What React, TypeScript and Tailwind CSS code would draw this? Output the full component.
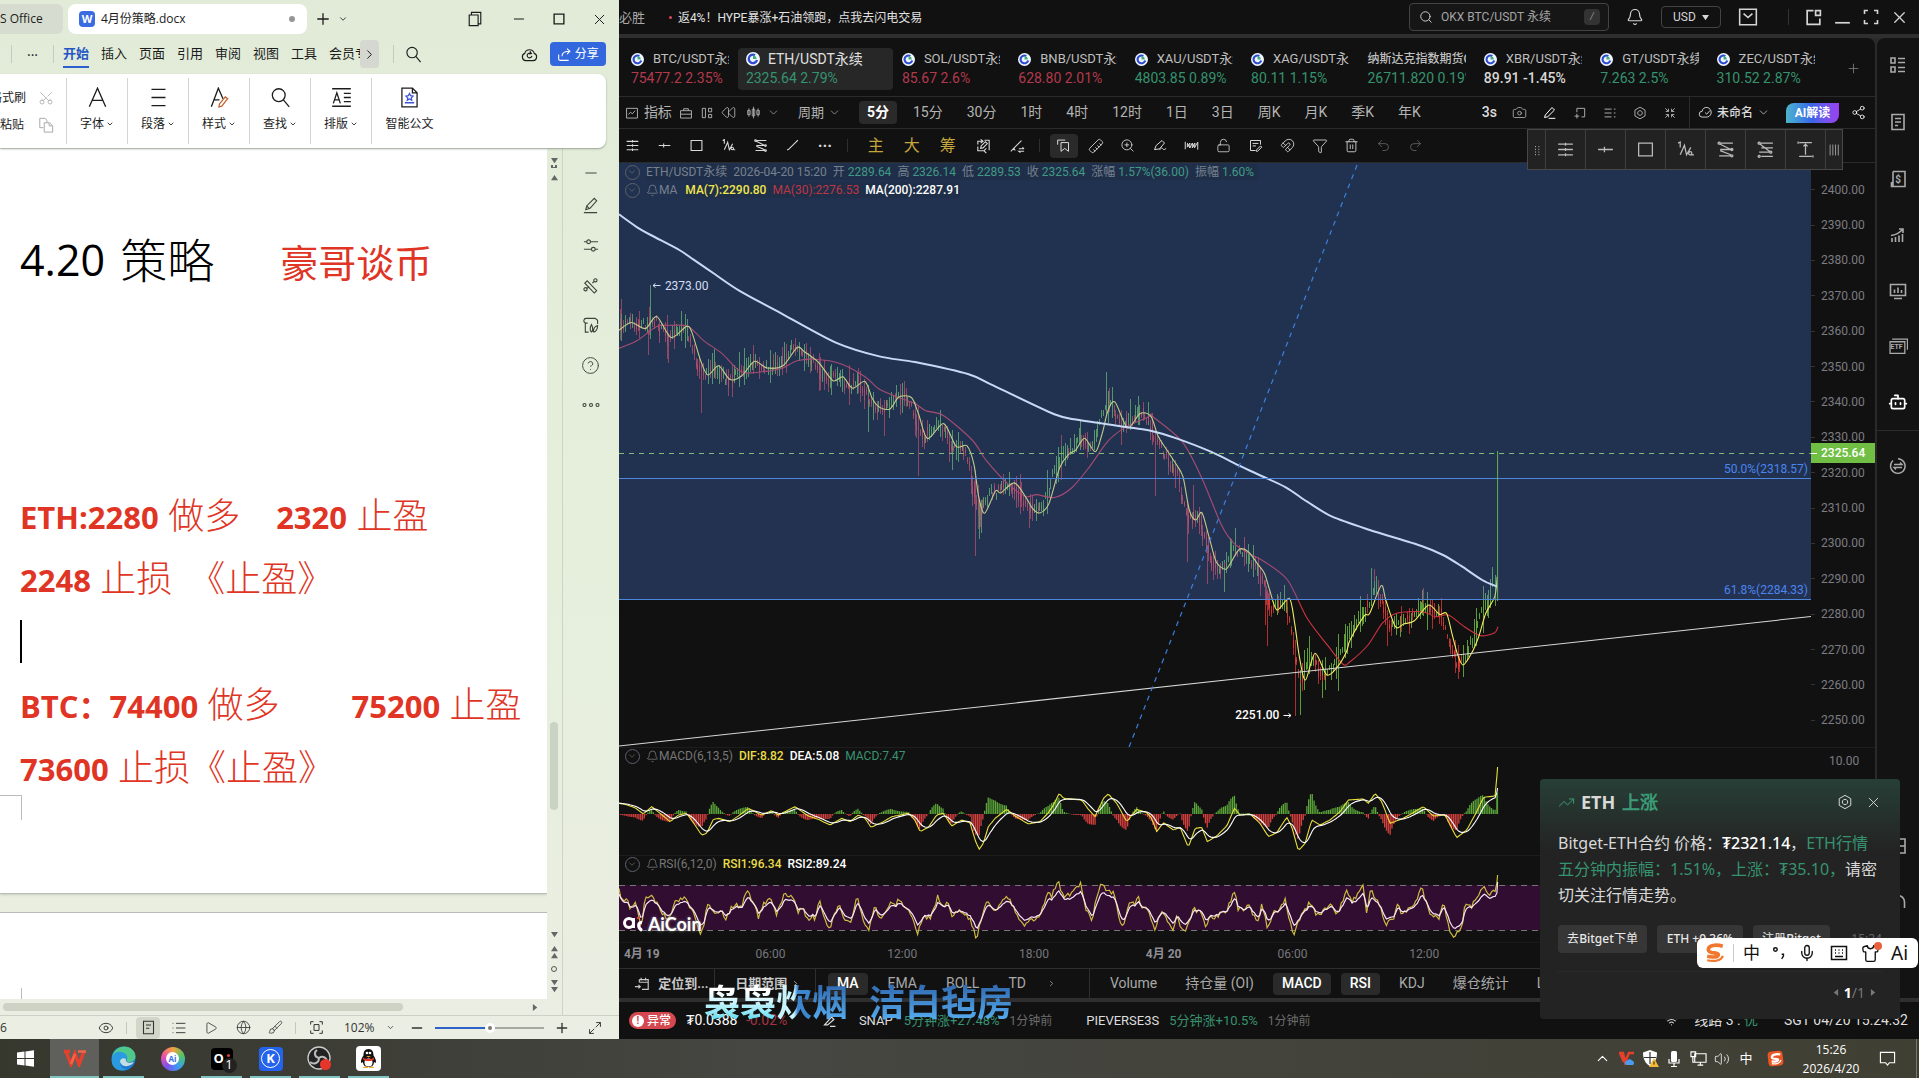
import React from "react";
import {
  Bell, Bot, Camera, ChevronDown, ChevronRight, ChevronUp, Eye, Filter, Globe, List, LockOpen, Magnet,
  Mic, Minus, Play, Plus, Redo2, Rewind, Ruler, Scissors, Search, Share2, Shirt,
  Trash2, TrendingUp, Undo2, Volume2, Wifi, X, ZoomIn, Brush, CircleHelp,
} from "lucide-react";

type P = [number, number];
type IconProps = { d: string; s?: number; w?: number; c?: string };

function Draw({ d, s = 18, w = 1.2, c = "" }: IconProps) {
  return (
    <svg width={s} height={s} viewBox="0 0 18 18" fill="none" stroke="currentColor" strokeWidth={w} className={c} aria-hidden="true">
      <path d={d} />
    </svg>
  );
}

/* ---------- icon paths on an 18 x 18 grid ---------- */
const D = {
  levels: "M2 4h14M2 9h14M2 14h14M9 2.5v3M9 7.5v3M9 12.5v3",
  hline: "M2 9h14M8 6.5v5",
  rect: "M2.5 3h13v12h-13z",
  wave: "M2 3l2-1v5M4 14l4-9 2 9 4-7M12 12.5a1.5 1.5 0 1 0 3 0a1.5 1.5 0 1 0-3 0M15 14h2",
  fib: "M4 3h12M4 9h11M3 15h11M4 4l10 5M4 10l10 4M2 3a1 1 0 1 0 2 0a1 1 0 1 0-2 0M14 15a1 1 0 1 0 2 0a1 1 0 1 0-2 0M14 9a1 1 0 1 0 2 0a1 1 0 1 0-2 0",
  fib2: "M4 3h12M5 7.500h11M3 11.500h10M5 15.500h11M4 4l9 7M2 3a1 1 0 1 0 2 0a1 1 0 1 0-2 0M13 11.500a1 1 0 1 0 2 0a1 1 0 1 0-2 0M2 15.500a1 1 0 1 0 2 0a1 1 0 1 0-2 0",
  range: "M3 2.500h12M3 15.500h12M9 4v10M7 6l2-2 2 2M2 1.500v2M16 14.500v2",
  trend: "M4 14L14 4M2.500 14.500l2-1M13.500 4.500l2-2",
  reedit: "M3 8V4.500h5M6 2.500l2.500 2L6 6.500M10 3.500h5V14M3 10v4.500h7M12 12l-2.500 2.500L12 17M6 12l.5-2.500L11 5l2 2-4.500 4.500z",
  penline: "M2 15L14 3M5 11l2 3M11 12h6M15 10.500l2 1.500M17 15h-6l2 1.500",
  bookmark: "M2 8V2.500h9M6 5.500h9V16l-4.500-3.500L6 16z",
  paint: "M3 14l2-5 7-6 3 3-6 7zM9 14.500c2-3 3-3 4-1.500s2 1 4-.5",
  mask: "M1.500 4.500v9M4 7v4l3-5v6l3-6v6l3-6v5l3.500-6v9M4 6l3 6M10 6l3 6",
  note: "M9 15H3V3h12v5M5.500 6.500h7M5.500 9.500h4M10 14.500l5-5 1.500 1.500-5 5H10z",
  chart: "M2 3h14v12.500H2zM4.500 11l2.500-3 2.500 2 3.500-4",
  brief: "M2 6h14v9.500H2zM6 6V3.500h6V6M2 10.500h14",
  grid: "M3 3h4v12H3zM11 3h4v4.500h-4zM11 11h4v4h-4z",
  candles: "M3.500 4v10M2 6.500h3v5H2zM9 2v14M7.500 5h3v8h-3zM14.500 4v10M13 6.500h3v5h-3z",
  crop: "M5 3h10v11h-4M5 3v5M5 10v6M2 13h6",
  lines: "M2 4h9M2 9h9M2 14h9M14 4h2M14 9h2M14 14h2",
  hex: "M9 1.500l6.500 3.700v7.600L9 16.500l-6.500-3.700V5.200zM9 6a3 3 0 1 0 .01 0",
  shrink: "M3 3l4 4M7 3.500V7H3.500M15 3l-4 4M11 3.500V7h3.500M3 15l4-4M7 14.500V11H3.500M15 15l-4-4M11 14.500V11h3.500",
  corner: "M9 2.500H3v13h12V10M11 2.500h4.500V7H11z",
  expand: "M2.500 6V2.500H6M12 2.500h3.500V6M15.500 12v3.500H12M6 15.500H2.500V12",
  mail: "M1.500 2h15v14h-15zM5 6l4 3.500 4-3.500",
  sidelist: "M2 2h4v5H2zM2 11h4v5H2zM9 2.500h7M9 6.500h7M9 11.500h7M9 15.500h7",
  doc: "M3 1.500h12v15H3zM6 5.500h6M6 9h6M6 12.500h3",
  growth: "M3 16v-4M6.500 16v-5M10 16V9.500M13.500 16V8M2 9.500c5-.5 8-2 11.500-6M10 3h4v4",
  monitor: "M1.500 2.500h15v11h-15zM5.500 11V7.500M9 11V5.500M12.500 11V8M5 16.500h8",
  swap: "M4 3.500a7.300 7.300 0 1 0 5-1.800M5 7.500h8l-2-2M13 10.500H5l2 2",
  calendar: "M6 4H16v11H9M6 4v3M6 7h10M8 2v3M13 2v3M1 12h6M5 10l2 2-2 2",
  para: "M3 2h12M3 9h12M3 16h12",
  focus: "M2 5.500V2h3.500M12.500 2H16v3.500M16 12.500V16h-3.500M5.500 16H2v-3.500M6 5.500h6v7H6z",
  full: "M10.500 2H16v5.500M16 2l-6 6M7.500 16H2v-5.500M2 16l6-6",
  pen: "M2 16.500h14M4 13.500l1-4 8-8 2.500 2.500-7 8zM5 9.500l3 3",
  sliders: "M2 5h3M9 5h8M5 5a2 2 0 1 0 4 0a2 2 0 1 0-4 0M2 13h8M14 13h3M10 13a2 2 0 1 0 4 0a2 2 0 1 0-4 0",
  tools: "M3 6.500l2.500-2.500L15.500 14.500l-2.500 2.500zM12.500 3.500a1.700 1.700 0 1 0 3.400 0a1.700 1.700 0 1 0-3.400 0M2 13a1.700 1.700 0 1 0 3.400 0a1.700 1.700 0 1 0-3.400 0M5.500 12l2-2M11 6.500l2-2",
  picture: "M6 6.500H4a2.500 2.500 0 1 1 1-5h9l2.500 2v4M3.500 6.500v9.500H7M10 16c-2-2-1.500-5 0-8 1.500 3 2 6 0 8M12 16c0-4 1-6 4.500-7 0 4-1.500 6.500-4.500 7",
  magnifier: "M2 7a5.500 5.500 0 1 0 11 0a5.500 5.500 0 1 0-11 0M11.500 11l5 6",
};

/* ---------- chart data ---------- */
const z = (pts: P[], ox: number, oy: number, sx: number, sy: number): P[] => pts.map(([x, y]) => [ox + x / sx, oy + y / sy]);

const ma7 = z([[11,365],[45,343],[85,360],[117,326],[157,385],[200,354],[215,370],[240,450],[260,490],[290,464],[322,503],[355,492],[390,452],[425,470],[470,464],[510,413],[530,425],[570,455],[610,506],[638,495],[665,527],[700,508],[720,555],[740,580],[770,585],[795,552],[830,553],[850,600],[875,668],[920,626],[955,690],[985,688],[1005,740],[1018,830],[1035,877],[1065,815],[1080,820],[1118,792],[1150,832],[1170,865],[1190,876],[1215,850],[1245,750],[1270,712],[1290,700],[1315,667],[1345,705],[1365,650],[1380,590],[1400,566],[1435,638],[1470,598],[1500,605],[1520,660],[1545,700],[1568,735]], 615, 200, 2.8, 2.8)
  .concat(z([[232,380],[250,480],[268,510],[285,488],[305,560],[325,635],[350,658],[365,640],[390,598],[415,605],[440,640],[460,670],[475,720],[495,780],[530,745],[545,820],[558,920],[575,990],[602,910],[635,975],[665,950],[690,905],[700,870],[740,797],[755,790],[787,707],[800,750],[827,830],[850,822],[880,812],[920,765],[950,793],[970,790],[985,850],[1000,910],[1016,945],[1040,910],[1060,860],[1080,790],[1105,740],[1112,680]], 1100, 350, 2.8, 3));
const ma30 = z([[11,415],[60,395],[117,354],[160,351],[205,354],[250,395],[300,430],[355,482],[420,480],[470,470],[510,450],[560,446],[630,458],[700,495],[740,530],[800,555],[840,570],[870,590],[920,604],[1000,672],[1040,730],[1100,795],[1150,830],[1180,825],[1230,833],[1280,805],[1330,745],[1380,675],[1430,636],[1500,605]], 615, 200, 2.8, 2.8)
  .concat(z([[145,198],[230,275],[285,385],[340,525],[375,580],[420,612],[460,635],[525,690],[580,805],[640,890],[680,943],[700,935],[750,885],[790,820],[830,790],[900,785],[940,800],[975,795],[1020,830],[1065,857],[1105,848],[1114,830]], 1100, 350, 2.8, 3));
const ma200 = z([[11,40],[60,75],[100,98],[180,140],[220,167],[280,208],[350,255],[470,320],[620,400],[740,438],[840,454],[990,488],[1060,520],[1230,600],[1300,616],[1440,637],[1500,646],[1568,666]], 615, 200, 2.8, 2.8)
  .concat(z([[310,305],[390,347],[440,372],[520,412],[580,455],[650,500],[755,540],[900,588],[960,615],[1010,647],[1070,690],[1112,710]], 1100, 350, 2.8, 3));
const difPts = z([[12,190],[30,193],[60,203],[85,222],[110,200],[150,232],[165,245],[190,225],[215,220],[240,255],[260,285],[275,280],[295,238],[310,235],[345,245],[370,228],[400,205],[440,225],[470,212],[490,225],[540,200],[580,228],[610,238],[645,255],[680,235],[705,245],[730,225],[750,235],[768,262],[800,248],[830,230],[880,220],[900,240],[915,275],[940,262],[965,225],[985,220],[1010,258],[1040,240],[1065,248],[1080,300],[1092,328],[1105,310],[1120,260],[1140,235],[1175,208],[1200,228],[1240,252],[1275,245],[1300,218],[1315,195],[1333,160],[1345,175],[1400,180],[1420,208],[1440,230],[1465,175],[1480,162]], 615, 740, 3, 3)
  .concat(z([[110,190],[140,245],[170,208],[200,218],[215,235],[230,275],[250,248],[280,270],[300,262],[325,322],[345,265],[365,262],[382,305],[410,288],[440,258],[463,205],[480,225],[510,222],[540,250],[565,290],[590,278],[620,232],[635,260],[655,332],[675,310],[695,240],[720,255],[750,240],[780,215],[805,180],[850,177],[865,190],[885,160],[905,185],[930,250],[970,235],[1030,200],[1060,228],[1095,225],[1115,265],[1130,293],[1160,270],[1190,215],[1210,172],[1245,168],[1253,82]], 1080, 740, 3, 3));
const rsiPts = z([[12,440],[20,485],[35,475],[45,510],[60,480],[80,560],[90,470],[110,465],[150,530],[165,535],[182,480],[210,478],[235,520],[255,587],[268,545],[278,490],[300,520],[320,515],[330,545],[350,500],[380,495],[398,452],[410,480],[430,530],[445,490],[470,475],[485,525],[507,460],[520,480],[530,460],[550,515],[565,505],[580,550],[595,525],[600,555],[612,480],[630,545],[645,562],[670,490],[690,540],[708,555],[727,465],[745,540],[762,568],[780,495],[795,535],[830,480],[840,500],[850,480],[890,525],[908,582],[925,530],[945,535],[968,470],[980,500],[1000,490],[1010,535],[1025,510],[1065,535],[1085,597],[1105,510],[1115,485],[1140,520],[1175,468],[1195,500],[1215,545],[1230,560],[1245,540],[1275,530],[1300,455],[1310,470],[1328,420],[1345,470],[1370,460],[1397,430],[1410,500],[1430,540],[1455,435],[1500,465]], 615, 740, 3, 3)
  .concat(z([[110,500],[127,565],[150,490],[165,490],[172,465],[185,505],[200,495],[225,568],[245,510],[265,550],[280,568],[290,530],[305,568],[320,570],[340,510],[360,510],[380,565],[390,530],[410,530],[440,510],[463,455],[475,510],[510,500],[520,530],[535,540],[545,490],[562,565],[580,520],[590,515],[615,480],[630,545],[643,587],[655,540],[690,487],[710,530],[750,490],[770,525],[800,455],[815,485],[850,440],[860,515],[872,445],[900,500],[917,555],[945,530],[950,490],[965,520],[1000,495],[1025,445],[1045,510],[1075,540],[1090,480],[1105,560],[1120,590],[1145,560],[1155,495],[1175,500],[1210,437],[1220,465],[1245,455],[1253,407]], 1080, 740, 3, 3));

function smooth(p: P[]): string {
  let s = `M${p[0][0].toFixed(1)} ${p[0][1].toFixed(1)}`;
  for (let i = 1; i < p.length; i++) {
    const a = p[Math.max(0, i - 2)], b = p[i - 1], c = p[i], n = p[Math.min(p.length - 1, i + 1)];
    s += `C${(b[0] + (c[0] - a[0]) / 7).toFixed(1)} ${(b[1] + (c[1] - a[1]) / 7).toFixed(1)} ${(c[0] - (n[0] - b[0]) / 7).toFixed(1)} ${(c[1] - (n[1] - b[1]) / 7).toFixed(1)} ${c[0].toFixed(1)} ${c[1].toFixed(1)}`;
  }
  return s;
}
const poly = (p: P[]) => "M" + p.map(([x, y]) => `${x.toFixed(1)} ${y.toFixed(1)}`).join("L");
function at(p: P[], x: number): number {
  if (x <= p[0][0]) return p[0][1];
  for (let i = 1; i < p.length; i++) {
    if (x <= p[i][0]) {
      const t = (x - p[i - 1][0]) / (p[i][0] - p[i - 1][0]);
      return p[i - 1][1] + t * (p[i][1] - p[i - 1][1]);
    }
  }
  return p[p.length - 1][1];
}
let seed = 20260420;
const rnd = () => {
  seed = (seed * 1664525 + 1013904223) % 4294967296;
  return seed / 4294967296;
};

const STEP = 1.81;
let upBars = "", downBars = "", upThick = "", downThick = "";
for (let x = 620; x < 1494; x += STEP) {
  const lead = at(ma7, x + 5) - at(ma7, x);
  const mid = at(ma7, x) + lead * 0.9 + (rnd() - 0.5) * 9;
  const len = 3 + rnd() * rnd() * 22;
  const up = rnd() < 0.5 - lead * 0.05;
  const seg = `M${x.toFixed(1)} ${(mid - len * 0.9).toFixed(1)}V${(mid + len * 0.9).toFixed(1)}`;
  const body = `M${x.toFixed(1)} ${(mid - len * 0.3).toFixed(1)}V${(mid + len * 0.35).toFixed(1)}`;
  if (up) { upBars += seg; upThick += body; } else { downBars += seg; downThick += body; }
}
const spikes: [number, number, number, boolean][] = [
  [650, 285, 318, true], [621, 299, 325, false], [648, 330, 355, false], [668, 340, 363, false], [701, 370, 413, false], [868, 385, 432, true], [884, 400, 436, false],
  [918, 405, 476, false], [952, 430, 470, true], [975, 470, 556, false], [979, 500, 539, true], [981, 500, 533, true], [1029, 505, 528, false], [1061, 435, 480, false],
  [1080, 420, 450, true], [1106, 372, 410, true], [1109, 388, 412, false], [1130, 399, 430, true], [1138, 396, 425, true], [1148, 402, 425, true], [1155, 430, 496, false], [1187, 500, 562, false],
  [1207, 545, 584, false], [1224, 560, 592, true], [1193, 485, 520, false], [1235, 528, 555, true], [1267, 590, 646, false], [1265, 580, 625, false], [1295, 640, 716, false], [1300, 670, 715, true], [1304, 650, 690, true],
  [1322, 660, 698, true], [1338, 634, 691, true], [1371, 568, 606, true], [1374, 569, 586, false], [1387, 610, 646, false], [1422, 590, 615, true], [1423, 588, 612, false],
  [1455, 640, 673, false], [1463, 645, 677, true], [1483, 586, 633, true], [1488, 590, 618, true], [1495, 575, 606, true],
];
for (const [x, a, b, up] of spikes) {
  if (up) upBars += `M${x} ${a}V${b}`; else downBars += `M${x} ${a}V${b}`;
}

const dif: P[] = [], dea: P[] = [];
let macdUp = "", macdDown = "";
let ema = at(difPts, 619);
for (let x = 619; x < 1497; x += STEP) {
  const v = at(difPts, x);
  ema = ema + (v - ema) * 0.26;
  dif.push([x, v]);
  dea.push([x, ema]);
  const h = (v - ema) * 1.9;
  if (h < 0) macdUp += `M${x.toFixed(1)} 814V${Math.max(794, 814 + h).toFixed(1)}`; else macdDown += `M${x.toFixed(1)} 814V${(814.5 + h).toFixed(1)}`;
}
dif.push([1497.5, 767]);
dea.push([1497.5, 788]);
const rsi1: P[] = [], rsi2: P[] = [];
let avg = at(rsiPts, 619);
for (let x = 619; x < 1497; x += STEP) {
  const v = at(rsiPts, x) + (rnd() - 0.5) * 5;
  avg = avg + (v - avg) * 0.6;
  rsi1.push([x, v]);
  rsi2.push([x, 910 + (avg - 910) * 0.72]);
}
rsi1.push([1497.5, 875]);
rsi2.push([1497.5, 882]);

/* ---------- small shared parts ---------- */
function CoinMark({ s = 13 }: { s?: number }) {
  return (
    <svg width={s} height={s} viewBox="0 0 14 14" aria-hidden="true" className="shrink-0">
      <circle cx="7" cy="7" r="7" fill="#f2f6ff" />
      <path d="M9 3.200A4.200 4.200 0 1 0 11 8" fill="none" stroke="#2b4bd0" strokeWidth="2.300" />
      <path d="M7 7V3.500a3.500 3.500 0 0 1 3.500 3.500z" fill="#3fae7c" />
    </svg>
  );
}
function Btn({ label, className = "", children }: { label?: string; className?: string; children: React.ReactNode }) {
  return <button type="button" aria-label={label} className={"flex items-center justify-center shrink-0 whitespace-nowrap " + className}>{children}</button>;
}
function Tri({ dir }: { dir: "left" | "right" | "up" | "down" }) {
  const path = { left: "M7 0v8L2 4z", right: "M1 0v8l5-4z", up: "M0 7h8L4 1z", down: "M0 1h8L4 7z" }[dir];
  return <svg width="7" height="7" viewBox="0 0 8 8" fill="currentColor" aria-hidden="true" className="shrink-0"><path d={path} /></svg>;
}

/* ---------- document editor ---------- */
function Num({ className = "", children }: { className?: string; children: React.ReactNode }) {
  return <b className={"text-[31px] font-bold " + className}>{children}</b>;
}

function Editor() {
  return (
    <section className="flex w-[32.25%] shrink-0 flex-col overflow-hidden bg-linear-to-b from-[#e1ebd8] via-[#e5efdb] to-[#ebeee3] text-[12px] text-[#1c1c1c] [font-family:'Open_Sans','Noto_Sans_CJK_SC',sans-serif]">
      <div className="flex h-[38px] items-center">
        <Btn className="h-[30px] w-[63px] !justify-start rounded-r-md bg-[#d6dccf]">S Office</Btn>
        <div className="ml-[5px] flex h-[30px] w-[239px] items-center rounded-lg bg-white pl-[11px] pr-[12px]">
          <span className="mr-[6px] flex h-4 w-4 items-center justify-center rounded-sm bg-[#3a6be3] text-[11px] font-bold text-white">W</span>
          4月份策略.docx
          <span className="ml-auto h-[6px] w-[6px] rounded-full bg-[#969696]" />
        </div>
        <Btn label="新建" className="ml-[7px]"><Plus size={18} strokeWidth={1.700} /></Btn>
        <Btn label="更多标签" className="ml-[6px]"><ChevronDown size={10} strokeWidth={2} /></Btn>
        <div className="ml-auto flex items-center gap-[24px] pr-[11px]">
          <Btn label="窗口"><Draw d="M2.500 4.500h10v12h-10zM5 4V1.500h10.500v13H13" s={16} w={1.300} /></Btn>
          <Btn label="最小化" className="ml-1"><Minus size={16} strokeWidth={1.500} /></Btn>
          <Btn label="最大化"><Draw d="M3.500 3.500h11v11h-11z" s={16} w={1.500} /></Btn>
          <Btn label="关闭"><X size={17} strokeWidth={1.400} /></Btn>
        </div>
      </div>

      <div className="flex h-[32px] items-center text-[13px]">
        <span className="ml-[11px] h-[18px] w-px bg-[#c5cabf]" />
        <Btn className="w-[41px] text-[14px]">···</Btn>
        <span className="h-[18px] w-px bg-[#c5cabf]" />
        <div className="ml-[9px] flex w-[297px] gap-3 overflow-hidden">
          <Btn className="border-b-2 border-[#2c5fd0] pb-[2px] pt-[4px] font-bold text-[#2456c5]">开始</Btn>
          {["插入", "页面", "引用", "审阅", "视图", "工具", "会员专享"].map((t) => <Btn key={t}>{t}</Btn>)}
        </div>
        <Btn label="更多" className="h-[28px] w-[19px] rounded bg-[#d4d8d0]"><ChevronRight size={15} strokeWidth={1.600} /></Btn>
        <span className="ml-[14px] h-[18px] w-px bg-[#c5cabf]" />
        <Btn label="搜索" className="ml-[11px]"><Draw d={D.magnifier} s={17} /></Btn>
        <div className="ml-auto flex items-center gap-3 pr-[13px]">
          <Btn label="云同步"><Draw d="M5 15.500a4 4 0 0 1-1-7.700 5.200 5.200 0 0 1 10 0 4 4 0 0 1-1 7.700zM11.500 10.500a2.500 2.500 0 1 1-1-2.500M9.500 5.500l1.500 2.500-2.500.5" s={17} /></Btn>
          <Btn className="h-6 w-[56px] gap-[3px] rounded bg-[#3367dd] text-[12px] text-white">
            <Draw d="M2 9v5.500a1.500 1.500 0 0 0 1.500 1.500H14M6 11c0-4 3-6 9-6M12 2l3.500 3L12 8.500" s={15} w={1.300} />分享
          </Btn>
        </div>
      </div>

      <div className="z-10 mr-[13px] mt-[4px] flex h-[74px] rounded-r-lg bg-white shadow-[0_1px_2px_#9aa294]">
        <div className="grid w-[66px] grid-cols-[26px_1fr] overflow-hidden py-[10px]">
          <Btn className="!justify-end">格式刷</Btn>
          <Btn label="剪切" className="text-[#a9a9a9]"><Scissors size={16} strokeWidth={1.200} className="-rotate-90" /></Btn>
          <Btn className="!justify-end">粘贴 <ChevronDown size={9} /></Btn>
          <Btn label="复制" className="text-[#a9a9a9]"><Draw d="M6 12H2V1.500h6l2 2V6M7 6.500h6l3.500 3.500v7H7zM12.500 6.500V10h4" s={16} w={1.100} /></Btn>
        </div>
        {[
          ["字体", "M2 17L9 1l7 16M4.500 11.500h9", true], ["段落", D.para, true], ["样式", "M2 17L8 1l4 9M4 11h5", true],
          ["查找", D.magnifier, true], ["排版", "M1 1.500h16M1 16.500h16M2 14l3-9 3 9M3 11h4M11 5.500h6M11 9h6M11 12.500h6", true], ["智能公文", "M2.500 1h9l4 4v12h-13zM11.500 1v4h4", false],
        ].map(([t, d, arrow]) => (
          <Btn key={t as string} className={"my-[4px] flex-col gap-[7px] border-l border-[#d4d4d4] " + (arrow ? "w-[61px]" : "w-[76px]")}>
            <span className="relative mt-[-2px]">
              <Draw d={d as string} s={21} w={1.100} />
              {t === "样式" && <span className="absolute inset-0 text-[#c8622c]"><Draw d="M9 14.500l5-6 2 1.500-5 6.500-2.500.5z" s={21} w={1.100} /></span>}
              {!arrow && <span className="absolute inset-0 text-[#3c53d8]"><Draw d="M5 13.500h8M9 5.500l1 2 2 .3-1.500 1.500.4 2-1.900-1-1.900 1 .4-2L6 7.800l2-.3z" s={21} w={1.100} /></span>}
            </span>
            <span className="flex items-center gap-[2px]">{t}{arrow && <ChevronDown size={8} strokeWidth={2.500} />}</span>
          </Btn>
        ))}
      </div>

      <div className="flex min-h-0 flex-1">
        <div className="flex min-w-0 flex-1 flex-col overflow-hidden text-[#e03424]">
          <article className="flex h-[746px] shrink-0 flex-col border-b border-[#b9bbb6] bg-white text-[36px] font-light whitespace-nowrap shadow-sm">
            <h1 className="mt-[70px] flex h-[84px] items-center pl-5 text-[43px] font-normal text-black">
              4.20&nbsp;<span className="ml-[4px] text-[47px] font-light">策略</span><span className="ml-[66px] mt-[4px] text-[38px] text-[#e03424]">豪哥谈币</span>
            </h1>
            <div className="mt-[182px] h-[63px] pl-5 leading-[63px]"><Num>ETH:2280</Num> 做多<Num className="ml-[36px]">2320</Num> 止盈</div>
            <div className="h-[63px] pl-5 leading-[63px]"><Num>2248</Num> 止损<span className="ml-[17px]">《止盈》</span></div>
            <div className="flex h-[63px] items-center pl-5"><span className="h-[43px] w-[2px] bg-black" /></div>
            <div className="h-[63px] pl-5 leading-[63px]"><Num>BTC：74400</Num> 做多<Num className="ml-[72px]">75200</Num> 止盈</div>
            <div className="h-[63px] pl-5 leading-[63px]"><Num>73600</Num> 止损《止盈》</div>
            <span className="-mt-1 h-[25px] w-[22px] border-r border-t border-[#bcbcbc]" />
          </article>
          <div className="mt-[18px] flex min-h-0 flex-1 items-end border-t border-[#b9bbb6] bg-white">
            <span className="h-[11px] w-[22px] border-r border-[#bcbcbc]" />
          </div>
          <div className="flex h-4 items-center gap-[129px] pl-[3px] text-[#666]">
            <span className="h-2 w-[400px] rounded bg-[#cdd2c5]" />
            <Tri dir="right" />
          </div>
        </div>
        <div className="flex w-4 flex-col items-center border-r border-[#cdd4c6] pb-[24px] pt-[9px] text-[#666]">
          <Tri dir="down" /><span className="mt-px h-[3px] w-[6px] border-x-2 border-b border-[#666]" />
          <span className="mt-[6px]"><Tri dir="up" /></span>
          <span className="mt-[541px] h-[88px] w-2 rounded bg-[#cad3c3]" />
          <span className="mb-[4px] mt-auto flex flex-col items-center gap-[7px]">
            <Tri dir="down" />
            <span><Tri dir="up" /><Tri dir="up" /></span>
            <span className="h-[6px] w-[6px] rounded-sm border-[1px] border-[#555]" />
            <span className="-mb-[6px]"><Tri dir="down" /><Tri dir="down" /></span>
          </span>
        </div>
        <div className="flex w-[56px] flex-col items-center pt-[5px] text-[#3f443b]">
          <Btn label="收起" className="-mb-2 h-10"><Minus size={18} strokeWidth={1.300} /></Btn>
          {[D.pen, D.sliders, D.tools, D.picture].map((d, i) => <Btn key={i} label="工具" className="h-10"><Draw d={d} s={17} w={1.200} /></Btn>)}
          <Btn label="帮助" className="h-10"><CircleHelp size={19} strokeWidth={1.200} /></Btn>
          <Btn label="更多" className="h-10"><Draw d="M1 9a1.500 1.500 0 1 0 3 0a1.500 1.500 0 1 0-3 0M7.500 9a1.500 1.500 0 1 0 3 0a1.500 1.500 0 1 0-3 0M14 9a1.500 1.500 0 1 0 3 0a1.500 1.500 0 1 0-3 0" w={1.100} /></Btn>
        </div>
      </div>

      <div className="flex h-6 items-center border-t border-[#ccd1c6] text-[#333]">
        <span className="w-[98px]">6</span>
        <Btn label="护眼" className="w-4"><Eye size={16} strokeWidth={1.400} /></Btn>
        <span className="ml-[12px] mr-[9px] h-3 w-px bg-[#c3c8bc]" />
        <Btn label="页面视图" className="mr-[3px] h-[22px] w-6 rounded bg-[#d3d7ca]"><Draw d="M3 1.500h12v15H3zM6 6h6M6 10h4" s={15} w={1.300} /></Btn>
        <Btn label="大纲" className="w-8"><List size={16} strokeWidth={1.400} /></Btn>
        <Btn label="阅读" className="w-8"><Play size={14} strokeWidth={1.400} /></Btn>
        <Btn label="网页" className="w-8"><Globe size={15} strokeWidth={1.300} /></Btn>
        <Btn label="批注" className="w-8"><Brush size={15} strokeWidth={1.300} /></Btn>
        <span className="ml-[4px] mr-[12px] h-3 w-px bg-[#c3c8bc]" />
        <Btn label="适应" className="w-4"><Draw d={D.focus} s={15} /></Btn>
        <Btn className="ml-[20px] gap-[11px]">102%<ChevronDown size={9} /></Btn>
        <Btn label="缩小" className="ml-[14px]"><Minus size={16} /></Btn>
        <input type="range" aria-label="缩放" defaultValue={51} className="mx-[10px] h-[2px] min-w-0 flex-1 appearance-none bg-linear-to-r from-[#2f62c8] from-50% to-[#a5a9a0] to-50% [&::-webkit-slider-thumb]:h-[10px] [&::-webkit-slider-thumb]:w-[10px] [&::-webkit-slider-thumb]:appearance-none [&::-webkit-slider-thumb]:rounded-full [&::-webkit-slider-thumb]:border-[3px] [&::-webkit-slider-thumb]:border-white [&::-webkit-slider-thumb]:bg-[#777]" />
        <Btn label="放大"><Plus size={16} /></Btn>
        <Btn label="全屏" className="ml-[18px] mr-[17px]"><Draw d={D.full} s={14} /></Btn>
      </div>
    </section>
  );
}

/* ---------- trading terminal ---------- */
const TABS: [string, string, string][] = [
  ["SOL/USDT永续", "85.67 2.6%", "text-[#b33a4d]"], ["BNB/USDT永续", "628.80 2.01%", "text-[#b33a4d]"], ["XAU/USDT永续", "4803.85 0.89%", "text-[#36936f]"],
  ["XAG/USDT永续", "80.11 1.15%", "text-[#36936f]"], ["纳斯达克指数期货CFD", "26711.820 0.19%", "text-[#36936f]"], ["XBR/USDT永续", "89.91 -1.45%", "font-medium text-[#d8d8d8]"],
  ["GT/USDT永续", "7.263 2.5%", "text-[#36936f]"], ["ZEC/USDT永续", "310.52 2.87%", "text-[#36936f]"],
];

function TitleBar() {
  return (
    <header className="flex h-[34px] shrink-0 items-center text-[12px] text-[#d5d5d5]">
      <span className="w-[50px] pt-px text-[13px] text-[#aaa]">必胜</span>
      <span className="mr-[6px] h-[3px] w-[3px] rounded-full bg-[#e0475a]" />
      <a href="#promo" className="mr-auto pt-px text-[#e2e2e2]">返4%！HYPE暴涨+石油领跑，点我去闪电交易</a>
      <label className="flex h-7 w-[200px] items-center rounded border border-[#434343] bg-[#161616] pl-[9px] pr-2">
        <Search size={14} strokeWidth={1.600} className="mr-2 shrink-0" />
        <input aria-label="搜索" defaultValue="OKX BTC/USDT 永续" className="min-w-0 flex-1 bg-transparent text-[#a5a5a5] outline-none" />
        <kbd className="flex h-4 w-4 items-center justify-center rounded-sm bg-[#333] text-[10px] text-[#888]">/</kbd>
      </label>
      <Btn label="提醒" className="ml-[17px]"><Bell size={18} strokeWidth={1.600} /></Btn>
      <label className="relative ml-[17px] flex h-[22px] w-[60px] items-center rounded border border-[#434343]">
        <select aria-label="货币" className="w-full appearance-none bg-transparent pl-[11px] outline-none"><option>USD</option></select>
        <span className="pointer-events-none absolute right-[11px]"><Tri dir="down" /></span>
      </label>
      <Btn label="消息" className="ml-[17px]"><Draw d={D.mail} s={20} w={1.400} /></Btn>
      <span className="ml-[30px] mr-[15px] h-4 w-px bg-[#333]" />
      <div className="flex gap-[10px] pr-[10px]">
        <Btn label="布局"><Draw d={D.corner} s={19} w={1.600} /></Btn>
        <Btn label="最小化"><Draw d="M2 14h14" s={19} w={1.600} /></Btn>
        <Btn label="全屏"><Draw d={D.expand} s={18} w={1.600} /></Btn>
        <Btn label="关闭"><X size={19} strokeWidth={1.600} /></Btn>
      </div>
    </header>
  );
}

function Quote({ name, price, cls }: { name: string; price: string; cls: string }) {
  const coin = name.includes("/");
  return (
    <Btn className="mr-[18px] min-w-0 flex-1 flex-col !items-start !justify-start overflow-hidden text-left">
      <span className={"flex h-[19px] items-center gap-[9px] " + (coin ? "text-[13px] text-[#bfbfbf]" : "text-[12px] font-medium text-[#bfbfbf]")}>{coin && <CoinMark />}{name}</span>
      <span className={"h-[19px] text-[14px] leading-[19px] " + cls}>{price}</span>
    </Btn>
  );
}

function Watch() {
  return (
    <nav className="flex h-[59px] shrink-0 items-center border-b border-[#2b2b2b] pl-3 pt-[3px]">
      <Btn className="mr-[9px] w-[98px] flex-col !items-start overflow-hidden">
        <span className="flex h-[19px] items-center gap-[9px] text-[13px] text-[#bfbfbf]"><CoinMark />BTC/USDT永续</span>
        <span className="h-[19px] text-[14px] leading-[19px] text-[#b33a4d]">75477.2 2.35%</span>
      </Btn>
      <Btn className="mr-[9px] h-[42px] w-[155px] flex-col !items-start rounded bg-[#272727] pl-2">
        <span className="flex h-[19px] items-center gap-[8px] text-[14px] text-[#e0e0e0]"><CoinMark s={14} />ETH/USDT永续</span>
        <span className="h-[19px] text-[14px] leading-[19px] text-[#36936f]">2325.64 2.79%</span>
      </Btn>
      {TABS.map(([n, p, c]) => <Quote key={n} name={n} price={p} cls={c} />)}
      <Btn label="添加" className="mr-[2px] w-[40px] text-[#888]"><Plus size={15} strokeWidth={1.200} /></Btn>
    </nav>
  );
}

function PeriodBar() {
  return (
    <div className="flex h-8 shrink-0 items-center border-b border-[#2b2b2b] pl-[6px] text-[13px] text-[#b4b4b4]">
      <Btn className="gap-[5px] text-[14px]"><Draw d={D.chart} s={14} />指标</Btn>
      <Btn label="工具箱" className="ml-[4px] w-[21px]"><Draw d={D.brief} s={14} /></Btn>
      <Btn label="布局" className="w-[21px]"><Draw d={D.grid} s={14} /></Btn>
      <Btn label="回放" className="w-[22px]"><Rewind size={15} strokeWidth={1.400} /></Btn>
      <Btn label="K线类型" className="ml-[3px] w-[40px] gap-[6px]"><Draw d={D.candles} s={15} w={1} /><ChevronDown size={13} strokeWidth={1.300} /></Btn>
      <Btn className="ml-[15px] gap-[4px]">周期<ChevronDown size={13} strokeWidth={1.300} /></Btn>
      <div className="ml-[26px] flex items-center gap-[24px] text-[14px]">
        <Btn className="-mx-2 h-[23px] rounded bg-[#2a2a2a] px-2 font-bold text-white">5分</Btn>
        {["15分", "30分", "1时", "4时", "12时", "1日", "3日", "周K", "月K", "季K", "年K"].map((t) => <Btn key={t}>{t}</Btn>)}
      </div>
      <div className="ml-auto flex h-full items-center">
        <Btn className="mr-2 text-[14px] font-medium text-[#ddd]">3s</Btn>
        <Btn label="截图" className="w-[30px]"><Camera size={15} strokeWidth={1.300} /></Btn>
        <Btn label="画线" className="w-[30px] text-white"><Draw d="M4 12l8-9 3 3-8 8-4 1zM8 16h8" s={15} /></Btn>
        {[D.crop, D.lines, D.hex, D.shrink].map((d, i) => <Btn key={i} label="设置" className="w-[30px]"><Draw d={d} s={14} /></Btn>)}
        <span className="ml-1 h-full w-px bg-[#2b2b2b]" />
        <Btn className="ml-2 gap-[4px] text-[12px] font-medium text-[#ddd]">
          <Draw d="M5 14.500a3.500 3.500 0 0 1 0-7 5 5 0 0 1 6-4.500M11 3a5.500 5.500 0 1 1-2 11.500H5M8.500 9l2 2 4-4.500" s={15} w={1.100} />未命名<ChevronDown size={13} strokeWidth={1.300} />
        </Btn>
        <Btn className="ml-[16px] h-5 w-[53px] rounded-tl-lg rounded-br-lg bg-linear-to-r from-[#4fb3cc] via-[#3b62e8] to-[#9a3ff0] text-[12px] font-bold text-white">AI解读</Btn>
        <Btn label="分享" className="ml-[12px] mr-[9px] text-white"><Share2 size={15} strokeWidth={1.300} /></Btn>
      </div>
    </div>
  );
}

function DrawBar() {
  const a = [D.levels, D.hline, D.rect, D.wave, D.fib, D.trend];
  return (
    <div className="relative flex h-[34px] shrink-0 items-center border-b border-[#2b2b2b] text-[#d8d8d8]">
      <div className="flex gap-1">
        {a.map((d, i) => <Btn key={i} label="画线工具" className="w-7"><Draw d={d} s={15} w={1.300} /></Btn>)}
        <Btn label="更多" className="w-7 font-bold">···</Btn>
      </div>
      <span className="ml-2 mr-[14px] h-[13px] w-px bg-[#2e2e2e]" />
      <div className="flex gap-2 text-[16px] text-[#c5a63c]">
        <Btn className="w-7">主</Btn><Btn className="w-7">大</Btn><Btn className="w-7">筹</Btn>
        <Btn label="编辑" className="w-7 text-[#d8d8d8]"><Draw d={D.reedit} s={17} /></Btn>
        <Btn label="趋势" className="-ml-[3px] w-7 text-[#d8d8d8]"><Draw d={D.penline} s={16} /></Btn>
      </div>
      <span className="ml-2 mr-[10px] h-[13px] w-px bg-[#2e2e2e]" />
      <div className="flex items-center gap-1">
        <Btn label="收藏" className="h-6 w-7 rounded bg-[#2a2a2a]"><Draw d={D.bookmark} s={15} /></Btn>
        <Btn label="测量" className="w-7"><Ruler size={16} strokeWidth={1.300} className="rotate-90" /></Btn>
        <Btn label="放大" className="w-7"><ZoomIn size={15} strokeWidth={1.400} /></Btn>
        <Btn label="画笔" className="w-7"><Draw d={D.paint} s={15} /></Btn>
        <Btn label="隐藏" className="w-7"><Draw d={D.mask} s={15} /></Btn>
        <Btn label="锁定" className="w-7"><LockOpen size={15} strokeWidth={1.300} /></Btn>
        <Btn label="笔记" className="w-7"><Draw d={D.note} s={15} /></Btn>
        <Btn label="磁铁" className="w-7"><Magnet size={15} strokeWidth={1.400} /></Btn>
        <Btn label="筛选" className="w-7"><Filter size={16} strokeWidth={1.300} /></Btn>
        <Btn label="删除" className="w-7"><Trash2 size={15} strokeWidth={1.400} /></Btn>
        <Btn label="撤销" className="w-7 text-[#666]"><Undo2 size={15} strokeWidth={1.300} /></Btn>
        <Btn label="重做" className="w-7 text-[#666]"><Redo2 size={15} strokeWidth={1.300} /></Btn>
      </div>
      <div className="absolute right-8 top-0 z-20 flex h-[41px] divide-x divide-[#3f3f3f] border border-[#484848] bg-[#222] text-[#bbb]">
        <span className="flex w-[18px] items-center justify-center"><Draw d="M6 4h1.500M11 4h1.500M6 8h1.500M11 8h1.500M6 12h1.500M11 12h1.500M6 16h1.500M11 16h1.500" s={12} w={1.500} /></span>
        {[D.levels, D.hline, D.rect, D.wave, D.fib, D.fib2, D.range].map((d, i) => <Btn key={i} label="快捷画线" className="w-10"><Draw d={d} s={19} w={1.200} /></Btn>)}
        <span className="flex w-[16px] items-center justify-center"><Draw d="M4 2v14M7.500 2v14M11 2v14M14.500 2v14" s={14} w={1} /></span>
      </div>
    </div>
  );
}

function Fold() {
  return <button type="button" aria-label="折叠" className="mr-[6px] flex h-[15px] w-[15px] items-center justify-center rounded-full border border-[#5c6068] text-[#777]"><ChevronDown size={10} strokeWidth={1.500} /></button>;
}

function PriceChart() {
  return (
    <div className="flex min-h-0 flex-1">
      <div className="relative min-w-0 flex-1 overflow-hidden">
        <svg className="absolute inset-0 h-full w-full" viewBox="619 163 1192 584" preserveAspectRatio="none" fill="none">
          <g shapeRendering="crispEdges">
            <path d={downBars} stroke="#ad3030" />
            <path d={upBars} stroke="#5c9a3c" />
            <path d={downThick} stroke="#d43a37" />
            <path d={upThick} stroke="#5fa535" />
          </g>
          <path d={smooth(ma30)} stroke="#cf3440" strokeWidth="1.100" />
          <path d={smooth(ma7)} stroke="#f3ee62" strokeWidth="1.100" />
          <path d={smooth(ma200)} stroke="#fff" strokeWidth="2" />
          <path d="M619 746L1811 616.500" stroke="#d8d8d8" />
          <path d="M619 453.500H1811" stroke="#9bd04a" strokeDasharray="5 5" />
          <path d="M619 163H1811V478H619z" fill="#4a82e3" fillOpacity=".3" />
          <path d="M619 478H1811V599H619z" fill="#507fe6" fillOpacity=".31" />
          <path d="M619 478.500H1811M619 599.500H1811" stroke="#4d86dc" />
          <path d="M1129 747L1357 165" stroke="#3c80dc" strokeWidth="1.200" strokeDasharray="5 5" />
          <path d="M1497.500 451V601" stroke="#62b552" />
        </svg>
        <div className="absolute left-[6px] top-px flex flex-col items-start gap-[2px] text-[12px] leading-4 text-[#77808f]">
          <div className="flex items-center">
            <Fold />
            <span className="flex gap-[6px] rounded bg-[#1f2f49] pr-1">
              <span>ETH/USDT永续</span><span>2026-04-20 15:20</span>
              {[["开", "2289.64"], ["高", "2326.14"], ["低", "2289.53"], ["收", "2325.64"], ["涨幅", "1.57%(36.00)"], ["振幅", "1.60%"]].map(([k, v]) => (
                <span key={k}>{k} <span className="text-[#419a85]">{v}</span></span>
              ))}
            </span>
          </div>
          <div className="flex items-center">
            <Fold />
            <Bell size={13} strokeWidth={1.500} />
            <span className="mr-2">MA</span>
            <span className="flex gap-[6px] rounded bg-[#1f2f49]">
              <span className="font-medium text-[#f0e64e]">MA(7):2290.80</span><span className="text-[#bd3646]">MA(30):2276.53</span><span className="font-medium text-white">MA(200):2287.91</span>
            </span>
          </div>
        </div>
        <span className="absolute left-[33px] top-[21%] flex -translate-y-1/2 items-center gap-[4px] text-[12px] text-[#d3def5]"><Draw d="M17 9H2M7 5L2 9l5 4" s={9} w={2} />2373.00</span>
        <span className="absolute right-[43.500%] top-[94.600%] flex -translate-y-1/2 items-center gap-[4px] text-[12px] font-medium text-white">2251.00<Draw d="M1 9h15M11 5l5 4-5 4" s={9} w={2} /></span>
        <span className="absolute right-[3px] top-[52.400%] -translate-y-1/2 text-[12px] text-[#4a85ef]">50.0%(2318.57)</span>
        <span className="absolute right-[3px] top-[73.100%] -translate-y-1/2 text-[12px] text-[#4a85ef]">61.8%(2284.33)</span>
      </div>
      <div className="relative flex w-16 flex-col py-[9px] text-[12px] text-[#7c7c82]">
        {Array.from({ length: 16 }, (_, i) => <span key={i} className="flex flex-1 items-center pl-[10px] before:absolute before:left-0 before:w-1 before:border-t before:border-[#333]">{2400 - i * 10}.00</span>)}
        <span className="absolute inset-x-0 top-[49.700%] flex h-5 -translate-y-1/2 items-center bg-[#70bf44] pl-[10px] font-medium text-white before:absolute before:left-0 before:w-[6px] before:border-t before:border-white">2325.64</span>
      </div>
    </div>
  );
}

function SubCharts() {
  return (
    <>
      <div className="flex h-[108px] shrink-0 border-t border-[#1d1d1d]">
        <div className="relative min-w-0 flex-1">
          <svg className="absolute inset-0 h-full w-full" viewBox="619 748 1192 107" preserveAspectRatio="none" fill="none">
            <path d={macdUp} stroke="#5ba53a" strokeWidth="1.300" />
            <path d={macdDown} stroke="#d8403f" strokeWidth="1.300" />
            <path d={poly(dif)} stroke="#e8e03f" strokeWidth="1.100" />
            <path d={poly(dea)} stroke="#fff" strokeWidth="1.100" />
            <path d="M1497.500 792V814" stroke="#5ba53a" />
          </svg>
          <div className="absolute left-[6px] top-0 flex items-center text-[12px] leading-4 text-[#777]">
            <Fold /><Bell size={13} strokeWidth={1.500} />MACD(6,13,5)
            <span className="ml-[6px] font-medium text-[#e8dc4a]">DIF:8.82</span><span className="ml-[6px] font-medium text-white">DEA:5.08</span><span className="ml-[6px] text-[#3a9272]">MACD:7.47</span>
          </div>
        </div>
        <span className="w-16 pl-[18px] pt-[5px] text-[12px] leading-4 text-[#7c7c82]">10.00</span>
      </div>
      <div className="flex h-[87px] shrink-0 border-t border-[#1d1d1d]">
        <div className="relative min-w-0 flex-1">
          <svg className="absolute inset-0 h-full w-full" viewBox="619 856 1192 86" preserveAspectRatio="none" fill="none">
            <path d="M619 885H1811V930H619z" fill="#310d31" />
            <path d="M619 885.500H1811M619 930.500H1811" stroke="#777" strokeDasharray="6 5" />
            <path d={poly(rsi1)} stroke="#cdbb3f" strokeWidth="1.200" />
            <path d={poly(rsi2)} stroke="#f7e6f7" strokeWidth="1.200" />
          </svg>
          <div className="absolute left-[6px] top-0 flex items-center text-[12px] leading-4 text-[#777]">
            <Fold /><Bell size={13} strokeWidth={1.500} />RSI(6,12,0)
            <span className="ml-[6px] font-medium text-[#e8dc4a]">RSI1:96.34</span><span className="ml-[6px] font-medium text-white">RSI2:89.24</span>
          </div>
          <div className="absolute bottom-[8px] left-1 flex items-center gap-[5px] text-[18px] font-bold leading-5 text-white [font-family:Lato,sans-serif] [text-shadow:0_0_3px_#888]">
            <svg width="20" height="17" viewBox="0 0 20 17" fill="none" stroke="#fff" strokeWidth="3" aria-hidden="true">
              <circle cx="6" cy="7" r="4.500" /><path d="M10.500 2v10M19 6.500c-4-1-5 5 0 8" /><circle cx="15" cy="2" r="1.300" fill="#e0432f" stroke="none" />
            </svg>
            AiCoin
          </div>
        </div>
        <span className="w-16" />
      </div>
      <div className="flex h-[26px] shrink-0 items-center border-t border-[#1a1a1a] pb-[4px] pl-[5px] pr-[339px] text-[12px] text-[#77777d]">
        {["4月 19", "06:00", "12:00", "18:00", "4月 20", "06:00", "12:00"].map((t, i) => <span key={i} className={"flex-1 " + (i % 4 === 0 ? "font-bold text-[#8e8e94] " : "pl-[5px]")}>{t}</span>)}
      </div>
    </>
  );
}

function IndicatorBar() {
  const on = "h-[22px] rounded bg-[#2a2a2a] px-[9px] -mx-[9px] font-medium text-white";
  return (
    <div className="flex h-[30px] shrink-0 items-center overflow-hidden border-t border-[#2e2e2e] text-[13px] text-[#a8a8a8]">
      <Btn className="ml-[10px] w-[85px] gap-[8px] font-bold text-[#c8c8c8]"><Draw d={D.calendar} s={16} w={1.300} />定位到...</Btn>
      <Btn className="h-full w-[102px] gap-[4px] border-x border-[#2e2e2e] pl-[6px] font-bold text-[#c8c8c8]">日期范围<ChevronRight size={9} /></Btn>
      <div className="ml-[21px] flex w-[252px] items-center gap-[29px] text-[14px]">
        <Btn className={on}>MA</Btn><Btn>EMA</Btn><Btn>BOLL</Btn><Btn>TD</Btn><ChevronRight size={9} className="ml-[-8px]" />
      </div>
      <div className="flex h-full items-center gap-[28px] border-l border-[#2e2e2e] pl-[20px] text-[14px]">
        <Btn>Volume</Btn><Btn>持仓量 (OI)</Btn><Btn className={on}>MACD</Btn><Btn className={on}>RSI</Btn><Btn>KDJ</Btn><Btn>爆仓统计</Btn><Btn>LSUR</Btn>
      </div>
    </div>
  );
}

function Ticker() {
  return (
    <footer className="flex h-[37px] shrink-0 items-center rounded-t text-[13px] text-[#ddd]">
      <span className="ml-[10px] flex h-[17px] w-[47px] items-center gap-[3px] rounded-full bg-[#d5484f] pl-[3px] text-[12px] font-medium text-white">
        <span className="flex h-3 w-3 items-center justify-center rounded-full bg-white text-[10px] font-bold text-[#d5484f]">!</span>异常
      </span>
      <span className="ml-[10px] w-[60px] text-[14px] text-white">₮0.0388</span>
      <span className="w-[76px] text-[14px] text-[#a53343]">-0.02%</span>
      <Btn label="编辑" className="mr-[21px] w-4"><Draw d="M2 14l9-10 3 3-8 7zM9 16h7" s={14} w={1.600} /></Btn>
      SNAP <span className="ml-[11px] text-[#38916f]">5分钟涨+27.48%</span><span className="ml-[10px] text-[12px] text-[#6c6c6c]">1分钟前</span>
      <span className="ml-[34px]">PIEVERSE3S</span><span className="ml-[10px] text-[#38916f]">5分钟涨+10.5%</span><span className="ml-[10px] text-[12px] text-[#6c6c6c]">1分钟前</span>
      <span className="ml-auto flex items-center text-[14px] whitespace-pre"><Wifi size={13} className="mr-[16px]" />线路 3 : <span className="text-[#38916f]">优</span></span>
      <span className="ml-[26px] mr-[11px] text-[14px]">SGT 04/20 15:24:32</span>
    </footer>
  );
}

function Rail() {
  return (
    <aside className="ml-[2px] flex w-[42px] shrink-0 flex-col rounded-tl-lg bg-[#131313] text-[#aaa]">
      <Btn label="列表" className="h-[54px]"><Draw d={D.sidelist} w={1.600} /></Btn>
      <Btn label="资讯" className="h-[60px]"><Draw d={D.doc} w={1.600} /></Btn>
      <Btn label="资金" className="relative h-[54px]"><Draw d="M4 1.500h12v15H2.500V12M4 1.500v15" w={1.600} /><span className="absolute text-[10px] font-bold">$</span></Btn>
      <Btn label="行情" className="h-[57px]"><Draw d={D.growth} w={1.600} /></Btn>
      <Btn label="数据" className="h-[55px]"><Draw d={D.monitor} w={1.600} /></Btn>
      <Btn label="ETF" className="relative h-[56px]"><Draw d="M1 4.500h14v11H1zM3 2h14.500v10" s={19} w={1.200} /><span className="absolute mr-[3px] mt-[3px] text-[7px] font-bold">ETF</span></Btn>
      <Btn label="机器人" className="h-[57px] border-b border-[#2c2c2c] text-white"><Bot size={20} strokeWidth={2} /></Btn>
      <Btn label="兑换" className="h-[70px]"><Draw d={D.swap} w={1.400} /></Btn>
      <div className="mt-auto flex flex-col pb-[10px]">
        <Btn label="表格" className="h-[57px]"><Draw d="M2 2h14v14H2zM2 9h14M9 2v14" w={1.600} /></Btn>
        <Btn label="客服" className="h-[57px]"><Draw d="M2.500 12V8a6.500 6.500 0 0 1 13 0v4M2.500 9v5M15.500 9v5" w={1.600} /></Btn>
        <Btn label="设置" className="h-[57px]"><Draw d={D.hex} w={1.600} /></Btn>
      </div>
    </aside>
  );
}

function Notice() {
  return (
    <div role="alert" className="absolute bottom-[59px] right-[19px] z-30 flex h-[240px] w-[360px] flex-col rounded bg-[#232323] bg-linear-to-b from-[#263f36] to-[#232323] to-[30%] px-[18px] text-[#d9d9d9]">
      <div className="mt-[10px] flex h-[26px] items-center text-[18px] font-bold">
        <TrendingUp size={17} strokeWidth={1.400} className="mr-[6px] text-[#3c9c78]" />ETH&nbsp;<span className="ml-[2px] text-[#3c9c78]">上涨</span>
        <Btn label="设置" className="ml-auto"><Draw d={D.hex} s={16} w={1.100} /></Btn>
        <Btn label="关闭" className="ml-[12px]"><X size={17} strokeWidth={1.300} /></Btn>
      </div>
      <p className="mt-[15px] text-[16px] leading-[26px] whitespace-nowrap">
        Bitget-ETH合约 价格：<span className="font-medium text-white">₮2321.14</span>，<span className="text-[#36936f]">ETH行情<br />五分钟内振幅：1.51%，上涨：₮35.10，</span>请密<br />切关注行情走势。
      </p>
      <div className="mt-[17px] flex items-center gap-[10px] text-[12px] font-medium text-[#e8e8e8]">
        <Btn className="h-[28px] w-[89px] rounded bg-[#363636]">去Bitget下单</Btn>
        <Btn className="h-[28px] w-[86px] rounded bg-[#363636]">ETH +0.36%</Btn>
        <Btn className="h-[28px] w-[77px] rounded bg-[#363636]">注册Bitget</Btn>
        <span className="ml-auto font-normal text-[#666]">15:24</span>
      </div>
      <div className="mt-[18px] flex items-center justify-end gap-[5px] border-t border-[#2a2a2a] pr-[5px] pt-[10px] text-[14px] text-[#777]">
        <Tri dir="left" /><span><b className="text-white">1</b>/1</span><Tri dir="right" />
      </div>
    </div>
  );
}

function SLogo({ s, c }: { s: number; c: string }) {
  return (
    <svg width={s} height={s} viewBox="0 0 18 18" aria-hidden="true">
      <path d="M16 3C10 1 3 2 3 6c0 4 9 2 9 4.500S6 13 2 12" fill="none" stroke={c} strokeWidth="3.300" />
      <path d="M2 15.500c6 1.500 13 .5 14-4" fill="none" stroke={c} strokeWidth="2" />
    </svg>
  );
}

function InputBar() {
  return (
    <div className="absolute bottom-[110px] right-px z-40 flex h-[30px] w-[221px] items-center rounded-md bg-white pl-2 text-[#111]">
      <SLogo s={20} c="#f0772d" />
      <span className="ml-2 h-[18px] w-px bg-[#ccc]" />
      <Btn className="ml-[9px] text-[17px] font-medium">中</Btn>
      <Btn label="标点" className="ml-[11px] w-[16px]"><Draw d="M3 5a2 2 0 1 0 4 0a2 2 0 1 0-4 0M12 10.500h2v2l-2 3" s={18} w={1.600} /></Btn>
      <Btn label="语音" className="ml-[11px] w-[18px]"><Mic size={18} strokeWidth={1.800} /></Btn>
      <Btn label="键盘" className="ml-[14px] w-[18px]"><Draw d="M1.500 2.500h15v13h-15zM5 6h1M8.500 6h1M12 6h1M5 9h1M8.500 9h1M12 9h1M5 12.500h8" s={18} w={1.500} /></Btn>
      <Btn label="皮肤" className="relative ml-[12px] w-5"><Shirt size={19} strokeWidth={1.700} /><span className="absolute -top-[2px] right-[-2px] h-2 w-2 rounded-full bg-[#e8603c]" /></Btn>
      <Btn className="ml-[11px] text-[19px]">Ai</Btn>
    </div>
  );
}

function Terminal() {
  return (
    <section className="flex min-w-0 flex-1 flex-col bg-[#111] [font-family:Roboto,'Noto_Sans_CJK_SC',sans-serif]">
      <TitleBar />
      <div className="flex min-h-0 flex-1 border-y-4 border-[#2f2f2f] bg-[#2a2a2a]">
        <div className="flex min-w-0 flex-1 flex-col rounded-tr-lg bg-[#111]">
          <Watch />
          <PeriodBar />
          <DrawBar />
          <PriceChart />
          <SubCharts />
          <IndicatorBar />
        </div>
        <Rail />
      </div>
      <Ticker />
    </section>
  );
}

/* ---------- desktop ---------- */
function Taskbar() {
  const slot = "h-full w-[49px] ";
  const running = "relative after:absolute after:inset-x-1 after:bottom-0 after:h-[2px] after:bg-[#7fc4c0]";
  return (
    <footer className="flex h-[39px] shrink-0 bg-linear-to-r from-[#36372d] via-[#464642] via-40% to-[#403f33] text-white [font-family:'Open_Sans','Noto_Sans_CJK_SC',sans-serif]">
      <Btn label="开始" className="w-[50px]">
        <svg width="17" height="17" viewBox="0 0 17 17" fill="#fff" aria-hidden="true"><path d="M0 2.500l7.500-1v6.500H0zM8.500 1.400L17 .2V8H8.500zM0 9h7.500v6.500l-7.500-1zM8.500 9H17v7.800l-8.500-1.200z" /></svg>
      </Btn>
      <Btn label="WPS" className={slot + "border-b-2 border-[#7fc4c0] bg-[#5f5f5b]"}>
        <svg width="24" height="18" viewBox="0 0 24 18" fill="none" aria-hidden="true"><path d="M1 2.500h6M3 2.500l5 13 4-11 4 11 5-13" stroke="#e5402c" strokeWidth="3.400" /><path d="M15 2.500h8M12 5l-4 10" stroke="#f2654a" strokeWidth="2.600" /></svg>
      </Btn>
      <Btn label="Edge" className={slot + running}>
        <svg width="25" height="25" viewBox="0 0 25 25" aria-hidden="true">
          <circle cx="12.500" cy="12.500" r="12" fill="#1f7bd0" /><path d="M1 12C2 4 8 .5 13 .5c7 0 12 5 11.500 10.500-.5 4-4 5.500-7 5-2.500-.5-2-2-1.500-3 1-2-1-5-5-5-5 0-8 1-10 4z" fill="#4fc98a" />
          <path d="M1 12C3 5 9 5 12 6.500 16 8 17 11 15.500 13.500c-2-2-6-1-6.500 3 0 4 4 7.500 8 7C8 27-1 22 1 12z" fill="#2a9be0" /><path d="M9 16c0-3 3-5 6-3-1 3 3 5 8 3-3 5-12 6-14 0z" fill="#dfeee8" fillOpacity=".85" />
        </svg>
      </Btn>
      <Btn label="AI" className={slot}>
        <span className="flex h-6 w-6 items-center justify-center rounded-full bg-[conic-gradient(#f2a33c,#4ec46b,#3a9df0,#7a52ee,#ee4fa8,#f2a33c)]"><span className="flex h-[13px] w-[13px] items-center justify-center rounded-full bg-white text-[8px] font-bold text-[#3a6df0]">Ai</span></span>
      </Btn>
      <Btn label="AiCoin" className={slot + running}>
        <span className="relative flex h-[22px] w-[22px] items-center justify-start rounded bg-black pl-[3px] text-[13px] font-bold">O<span className="absolute right-[3px] top-[6px] h-[3px] w-[3px] rounded-full bg-[#e0432f]" /><span className="absolute -bottom-[3px] -right-[4px] flex h-[15px] w-[15px] items-center justify-center rounded-full bg-[#222] text-[13px] font-normal">1</span></span>
      </Btn>
      <Btn label="K" className={slot + running}>
        <span className="flex h-6 w-6 items-center justify-center rounded bg-[#2463eb]"><span className="flex h-[19px] w-[19px] items-center justify-center rounded-full border border-white text-[13px] font-bold">K</span></span>
      </Btn>
      <Btn label="OBS" className={slot + running}>
        <svg width="25" height="25" viewBox="0 0 25 25" aria-hidden="true"><circle cx="12" cy="12" r="11" fill="#222" stroke="#ccc" strokeWidth="1.300" /><path d="M12 12c-5-1-5-6-2-8M12 12c4-3 8 0 8 4M12 12c0 5-5 7-9 4" fill="none" stroke="#bbb" strokeWidth="2" /><circle cx="18.500" cy="18.500" r="5.500" fill="#e8352c" /></svg>
      </Btn>
      <Btn label="QQ" className={slot + running}>
        <svg width="25" height="25" viewBox="0 0 25 25" aria-hidden="true"><rect width="25" height="25" rx="4" fill="#fff" /><path d="M12.500 3c-4 0-5 3-5 6.500C5 13 4.500 16 5.500 17l1.500-1c0 3 2 5 5.500 5s5.500-2 5.500-5l1.500 1c1-1 .5-4-2-7.500C17.500 6 16.500 3 12.500 3z" fill="#111" /><ellipse cx="12.500" cy="16.500" rx="4" ry="4" fill="#fff" /><path d="M7 11.500c3 2 8 2 11 0v2c-3 2-8 2-11 0z" fill="#e5332a" /><path d="M10 10h5l-2.500 1.500z" fill="#f5a623" /><path d="M7 22c0-2 5-2 5 0zM13 22c0-2 5-2 5 0z" fill="#f5a623" /><circle cx="11" cy="7" r="1.300" fill="#fff" /><circle cx="14" cy="7" r="1.300" fill="#fff" /></svg>
      </Btn>
      <div className="ml-auto flex items-center">
        <Btn label="显示隐藏图标" className="w-6"><ChevronUp size={17} strokeWidth={1.500} /></Btn>
        <Btn label="WPS 云" className="w-6"><svg width="17" height="15" viewBox="0 0 17 15" fill="none" aria-hidden="true"><path d="M1 2h4l2 9 4-9h5M2 2l4 9" stroke="#e5402c" strokeWidth="2.500" /><path d="M8 14a2.500 2.500 0 0 1 1-4.500 3 3 0 0 1 5 0A2.500 2.500 0 0 1 15 14z" fill="#4a9cf0" /></svg></Btn>
        <Btn label="安全" className="w-6"><svg width="17" height="17" viewBox="0 0 17 17" aria-hidden="true"><path d="M8 0l7 2.500c0 6-2 11-7 13.500-5-2.500-7-7.500-7-13.500z" fill="#fff" /><path d="M8 2v12M2 7.500h12" stroke="#333" strokeWidth="1.200" /><path d="M12 8l5 9H7z" fill="#f3b93a" /><path d="M12 11.500v3" stroke="#222" /></svg></Btn>
        <Btn label="麦克风" className="w-6"><svg width="14" height="18" viewBox="0 0 14 18" aria-hidden="true"><rect x="4" y="1" width="6" height="11" rx="1.500" fill="#fff" /><path d="M2 9v4h10V9M7 13v3.500M4 16.500h6" fill="none" stroke="#fff" strokeWidth="1.200" /></svg></Btn>
        <Btn label="网络" className="w-6"><Draw d="M5 4h12v9H5zM1 2h5v5H1zM8 16h6M11 13v3M3 7v6h2" s={17} /></Btn>
        <Btn label="音量" className="w-6"><Volume2 size={16} strokeWidth={1.200} /></Btn>
        <Btn className="w-6 text-[13px]">中</Btn>
        <Btn label="输入法" className="ml-[9px] w-4"><span className="flex h-[15px] w-[15px] -rotate-6 items-center justify-center rounded-sm bg-[#ea5524]"><SLogo s={12} c="#fff" /></span></Btn>
        <time className="ml-[10px] w-[76px] text-center text-[12px] leading-[19px]">15:26<br />2026/4/20</time>
        <Btn label="通知" className="ml-[9px] w-[18px]"><Draw d="M1.500 2.500h15v11H11L9 16l-2-2.500H1.500z" s={17} /></Btn>
        <span className="ml-[20px] mr-[2px] h-[39px] w-px bg-[#77776c]" />
      </div>
    </footer>
  );
}

export default function App() {
  return (
    <div lang="zh-CN" className="relative flex h-screen flex-col overflow-hidden bg-[#111]">
      <main className="flex min-h-0 flex-1">
        <Editor />
        <Terminal />
      </main>
      <Taskbar />
      <p className="pointer-events-none absolute bottom-[57px] left-[704px] z-30 flex text-[36px] font-bold leading-[42px] whitespace-pre [font-family:'Noto_Sans_CJK_SC',sans-serif]">
        <span className="bg-linear-to-b from-white from-30% to-[#4fdcf0] bg-clip-text text-transparent">袅袅</span>
        <span className="bg-linear-to-r from-[#c9f4fb] from-50% to-[#3c86cf] to-60% bg-clip-text text-transparent">炊</span>
        <span className="bg-linear-to-b from-[#2c5fa6] to-[#57aef0] bg-clip-text text-transparent">烟</span>
        <span className="ml-[21px] bg-linear-to-b from-[#2c5fa6] to-[#57aef0] bg-clip-text text-transparent">洁白毡房</span>
      </p>
      <Notice />
      <InputBar />
    </div>
  );
}
